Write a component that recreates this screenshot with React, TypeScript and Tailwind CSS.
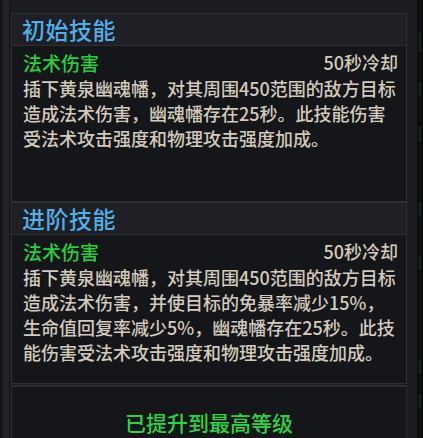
import React from "react";

const font = { fontFamily: '"Noto Sans CJK SC", "Noto Sans", sans-serif' };

function Section({
  title,
  lines,
  contentH,
}: {
  title: string;
  lines: string[];
  contentH: string;
}) {
  return (
    <div className="flex flex-col">
      <div className="h-[33px] border border-[#2c2f34] bg-[#1e2025] pl-[10px] flex items-center">
        <span className="text-[23px] leading-none text-[#4fafe6] tracking-[0.5px] font-medium">{title}</span>
      </div>
      <div className={`${contentH} border-x border-b border-[#2c2f34] bg-[#151619] pl-[11px] pr-[8px] pt-[2px]`}>
        <div className="flex justify-between items-center h-[28px]">
          <span className="text-[19px] leading-none text-[#26cf3e] font-medium">法术伤害</span>
          <span className="text-[18px] leading-none text-[#d2cabc] font-medium">50秒冷却</span>
        </div>
        <div className="text-[18px] leading-[25px] text-[#d2cabc] font-medium">
          {lines.map((l, i) => (
            <div key={i} className="whitespace-nowrap">{l}</div>
          ))}
        </div>
      </div>
    </div>
  );
}

export default function App() {
  return (
    <div className="w-[423px] h-[438px] overflow-hidden bg-[#1b1d21] flex" style={font}>
      <div className="w-[3px] bg-[#141619]" />
      <div className="w-[6px] bg-[#1f2226]" />
      <div className="w-[2px] bg-[#17191c]" />
      <div className="w-[396px] flex flex-col pt-[13px]">
        <Section
          title="初始技能"
          contentH="h-[156px]"
          lines={[
            "插下黄泉幽魂幡，对其周围450范围的敌方目标",
            "造成法术伤害，幽魂幡存在25秒。此技能伤害",
            "受法术攻击强度和物理攻击强度加成。",
          ]}
        />
        <Section
          title="进阶技能"
          contentH="h-[149px]"
          lines={[
            "插下黄泉幽魂幡，对其周围450范围的敌方目标",
            "造成法术伤害，并使目标的免暴率减少15%，",
            "生命值回复率减少5%，幽魂幡存在25秒。此技",
            "能伤害受法术攻击强度和物理攻击强度加成。",
          ]}
        />
        <div className="mt-[1px] flex-1 border-x border-t-2 border-[#2a2d32] bg-[#151619] flex justify-center pt-[25px]">
          <span className="text-[21px] leading-none text-[#2bd444] h-fit font-medium">已提升到最高等级</span>
        </div>
      </div>
      <div className="w-[10px]" />
      <div className="w-[6px] bg-[#0c0d0f] flex flex-col pl-[2px]">
        <div className="h-[32px]" />
        <div className="h-[20px] w-[2px] bg-[#0f2a14]" />
        <div className="h-[30px]" />
        <div className="h-[14px] w-[2px] bg-[#0f2a14]" />
        <div className="h-[30px]" />
        <div className="h-[16px] w-[2px] bg-[#0f2a14]" />
        <div className="h-[60px]" />
        <div className="h-[14px] w-[2px] bg-[#0f2a14]" />
        <div className="h-[40px]" />
        <div className="h-[14px] w-[2px] bg-[#0f2a14]" />
        <div className="h-[90px]" />
        <div className="h-[14px] w-[2px] bg-[#0f2a14]" />
        <div className="h-[20px]" />
        <div className="h-[14px] w-[2px] bg-[#0f2a14]" />
      </div>
    </div>
  );
}
